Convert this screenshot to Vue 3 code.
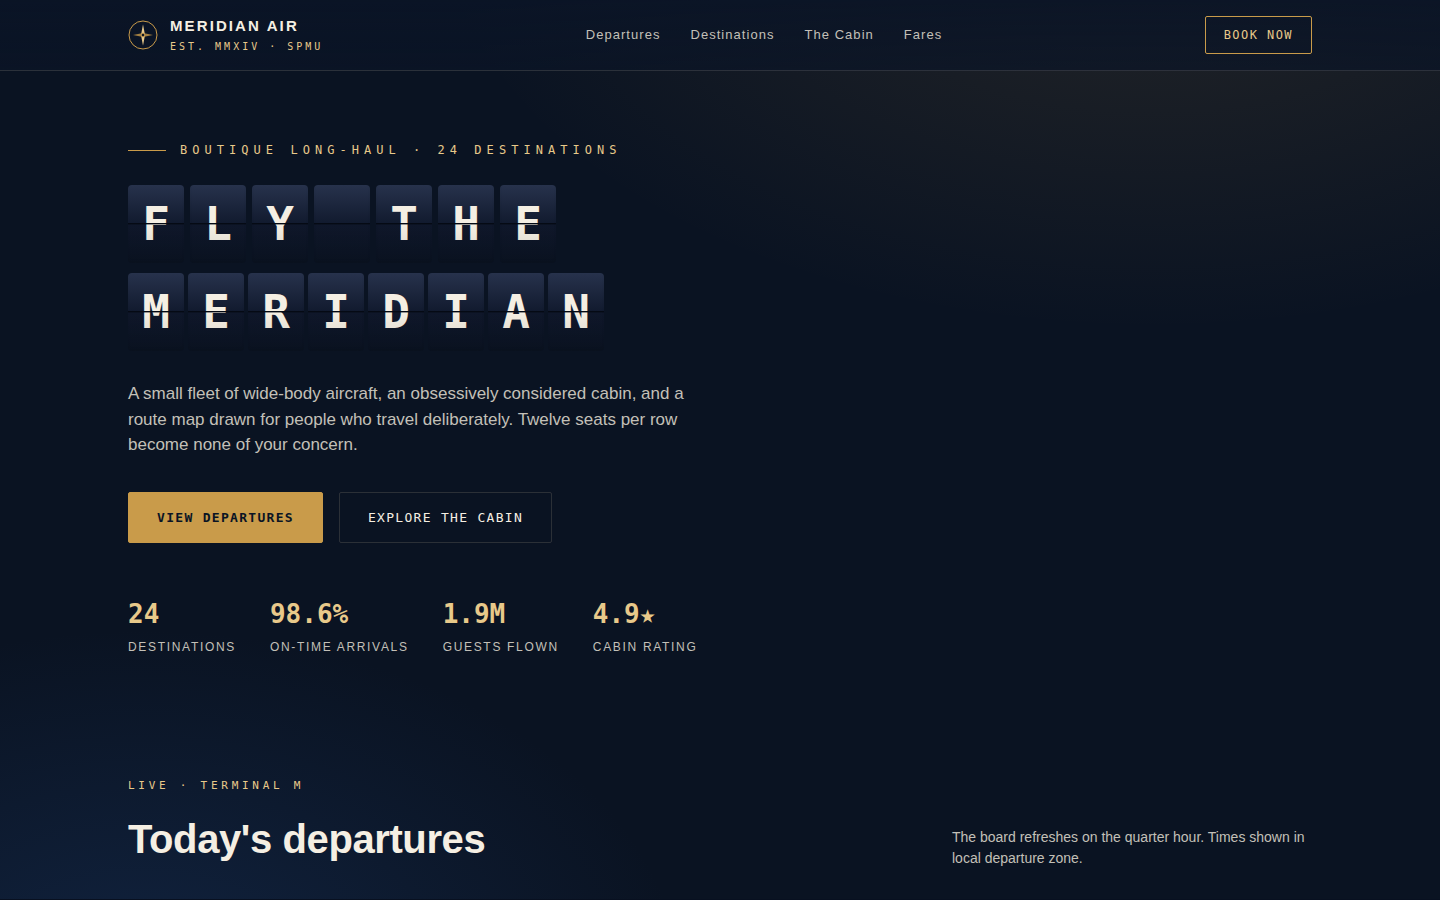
<script setup>
const navLinks = ['Departures', 'Destinations', 'The Cabin', 'Fares']
const board = [
  { word: 'FLY THE', kind: 'spaced' },
  { word: 'MERIDIAN', kind: 'tight' },
]
const stats = [
  { value: '24', label: 'Destinations' },
  { value: '98.6%', label: 'On-time arrivals' },
  { value: '1.9M', label: 'Guests flown' },
  { value: '4.9★', label: 'Cabin rating' },
]
</script>

<template>
  <div class="page">
    <header class="site-header">
      <div class="wrap header-row">
        <a class="brand" href="#">
          <svg class="brand-mark" viewBox="0 0 30 30" aria-hidden="true">
            <circle cx="15" cy="15" r="14" fill="none" stroke="#c99b4a" stroke-width="1" />
            <path d="M5 15L15 13L25 15L15 17Z" fill="#c99b4a" opacity="0.8" />
            <path d="M15 4.500L17 15L15 25.500L13 15Z" fill="#e8c98a" />
            <circle cx="15" cy="15" r="1.800" fill="#0a1424" stroke="#c99b4a" stroke-width="0.800" />
          </svg>
          <span class="brand-text">
            <span class="brand-name">MERIDIAN AIR</span>
            <span class="brand-sub">EST. MMXIV · SPMU</span>
          </span>
        </a>
        <nav class="nav" aria-label="Primary">
          <a v-for="link in navLinks" :key="link" href="#">{{ link }}</a>
        </nav>
        <button class="book" type="button">BOOK NOW</button>
      </div>
    </header>

    <main>
      <section class="wrap hero">
        <p class="eyebrow">BOUTIQUE LONG-HAUL · 24 DESTINATIONS</p>
        <h1 class="board" aria-label="Fly the Meridian">
          <span v-for="row in board" :key="row.word" class="board-row" :class="row.kind">
            <span v-for="(letter, i) in row.word" :key="i" class="flap">{{ letter }}</span>
          </span>
        </h1>
        <p class="lede">
          A small fleet of wide-body aircraft, an obsessively considered cabin, and a route map
          drawn for people who travel deliberately. Twelve seats per row become none of your
          concern.
        </p>
        <div class="actions">
          <button class="btn primary" type="button">VIEW DEPARTURES</button>
          <button class="btn ghost" type="button">EXPLORE THE CABIN</button>
        </div>
        <dl class="stats">
          <div v-for="s in stats" :key="s.label" class="stat">
            <dt>{{ s.label }}</dt>
            <dd>{{ s.value }}</dd>
          </div>
        </dl>
      </section>

      <section class="wrap departures">
        <p class="kicker">LIVE · TERMINAL M</p>
        <div class="section-head">
          <h2>Today's departures</h2>
          <p class="note">
            The board refreshes on the quarter hour. Times shown in local departure zone.
          </p>
        </div>
      </section>
    </main>
  </div>
</template>

<style>
html,
body {
  background: #0a1424;
}
</style>

<style scoped>
.page {
  --gold: #c99b4a;
  --gold-light: #e8c98a;
  --cream: #f5efe3;
  --muted: #c3c0b8;
  --line: rgba(232, 214, 180, 0.15);
  --mono: "DejaVu Sans Mono", monospace;
  box-sizing: border-box;
  min-height: 100vh;
  overflow: hidden;
  border-bottom: 1px solid #081020;
  color: var(--cream);
  font-family: "Liberation Sans", Arial, sans-serif;
  font-size: 16px;
  line-height: 1.5;
  background:
    radial-gradient(1200px 700px at 80% -10%, rgba(201, 155, 74, 0.14), transparent 60%) top / 100% 100vh no-repeat,
    radial-gradient(900px 600px at 10% 110%, rgba(29, 63, 115, 0.37), transparent 60%) top / 100% 100vh no-repeat,
    #0a1322;
}
p,
h1,
h2,
dl,
dd {
  margin: 0;
}
a {
  color: inherit;
  text-decoration: none;
}
button {
  font-family: var(--mono);
  cursor: pointer;
}
.wrap {
  box-sizing: border-box;
  max-width: 1248px;
  margin: 0 auto;
  padding: 0 32px;
}
.site-header {
  border-bottom: 1px solid var(--line);
  background: linear-gradient(rgba(10, 20, 38, 0.9), rgba(10, 20, 38, 0.7));
}
.header-row {
  display: flex;
  align-items: center;
  justify-content: space-between;
  padding-top: 16px;
  padding-bottom: 16px;
}
.brand {
  display: flex;
  align-items: center;
  gap: 12px;
}
.brand-mark {
  width: 30px;
  height: 30px;
}
.brand-text {
  display: grid;
  gap: 4px;
}
.brand-name {
  font-size: 15px;
  line-height: 20px;
  font-weight: 700;
  letter-spacing: 0.14em;
}
.brand-sub {
  font-family: var(--mono);
  font-size: 10px;
  line-height: 14px;
  letter-spacing: 0.3em;
  color: var(--gold-light);
}
.nav {
  display: flex;
  gap: 30px;
  font-size: 13px;
  letter-spacing: 0.08em;
  color: var(--muted);
}
.book {
  padding: 11px 18px;
  border: 1px solid var(--gold);
  border-radius: 2px;
  background: transparent;
  color: var(--gold-light);
  font-size: 12px;
  line-height: 14px;
  letter-spacing: 0.12em;
}
.hero {
  padding-top: 70px;
}
.eyebrow {
  display: flex;
  align-items: center;
  gap: 14px;
  font-family: var(--mono);
  font-size: 12px;
  line-height: 18px;
  letter-spacing: 0.42em;
  color: var(--gold-light);
}
.eyebrow::before {
  content: "";
  width: 38px;
  height: 1px;
  background: var(--gold);
}
.board {
  display: grid;
  gap: 10px;
  margin-top: 26px;
}
.board-row {
  display: flex;
}
.spaced {
  gap: 6px;
}
.tight {
  gap: 4px;
}
.flap {
  position: relative;
  width: 56px;
  height: 78px;
  border-radius: 4px;
  overflow: hidden;
  background: linear-gradient(#27324c, #111a2e 50%, #0f172a 51%, #0b1424);
  box-shadow: inset 0 -2px 3px rgba(0, 0, 0, 0.06);
  font-family: var(--mono);
  font-size: 46px;
  line-height: 78px;
  font-weight: 700;
  text-align: center;
}
.flap::before {
  content: "";
  position: absolute;
  inset: 50% 0 0;
  background: linear-gradient(transparent, rgba(0, 0, 0, 0.12));
}
.flap::after {
  content: "";
  position: absolute;
  top: calc(50% - 1px);
  left: 0;
  right: 0;
  height: 1px;
  background: #050a14;
  box-shadow: 0 1px 0 rgba(5, 10, 20, 0.4);
}
.lede {
  max-width: 580px;
  margin-top: 30px;
  font-size: 17px;
  color: var(--muted);
}
.actions {
  display: flex;
  gap: 16px;
  margin-top: 34px;
}
.btn {
  padding: 17px 28px;
  border: 1px solid transparent;
  border-radius: 2px;
  font-size: 13px;
  line-height: 15px;
  letter-spacing: 0.1em;
}
.primary {
  border-color: var(--gold);
  background: var(--gold);
  color: #0a1424;
  font-weight: 700;
}
.ghost {
  border-color: var(--line);
  background: transparent;
  color: var(--cream);
}
.stats {
  display: flex;
  gap: 34px;
  margin-top: 50px;
}
.stat {
  display: flex;
  flex-direction: column-reverse;
}
.stat dd {
  font-family: var(--mono);
  font-size: 26px;
  line-height: 42px;
  font-weight: 700;
  color: var(--gold-light);
}
.stat dt {
  margin-top: 2px;
  font-size: 12px;
  line-height: 20px;
  letter-spacing: 0.14em;
  text-transform: uppercase;
  color: var(--muted);
}
.departures {
  padding-top: 120px;
}
.kicker {
  font-family: var(--mono);
  font-size: 11px;
  line-height: 18px;
  letter-spacing: 0.34em;
  color: var(--gold-light);
}
.section-head {
  display: flex;
  align-items: flex-end;
  justify-content: space-between;
  margin-top: 14px;
}
h2 {
  font-size: 40px;
  line-height: 60px;
  letter-spacing: -0.01em;
}
.note {
  width: 360px;
  font-size: 14px;
  color: var(--muted);
}
</style>
